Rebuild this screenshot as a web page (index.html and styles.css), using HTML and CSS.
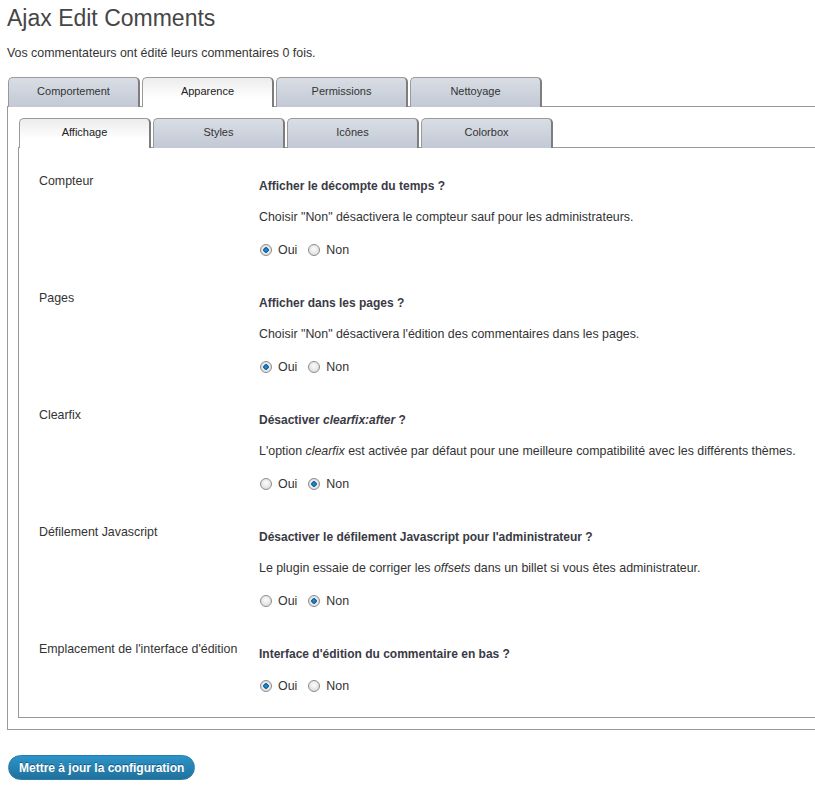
FILE: index.html
```html
<html>
<head>
  <title>Ajax Edit Comments</title>
  <link rel="stylesheet" href="styles.css">
</head>
<body>
  <div class="wrap">
    <h1>Ajax Edit Comments</h1>
    <p class="intro">Vos commentateurs ont édité leurs commentaires 0 fois.</p>

    <ul class="tabs outer-tabs">
      <li class="tab">Comportement</li>
      <li class="tab active">Apparence</li>
      <li class="tab">Permissions</li>
      <li class="tab">Nettoyage</li>
    </ul>
    <div class="panel outer-panel">
      <ul class="tabs inner-tabs">
        <li class="tab active">Affichage</li>
        <li class="tab">Styles</li>
        <li class="tab">Icônes</li>
        <li class="tab">Colorbox</li>
      </ul>
      <div class="panel inner-panel">

        <div class="row">
          <div class="label">Compteur</div>
          <div class="field">
            <h4>Afficher le décompte du temps ?</h4>
            <p class="desc">Choisir "Non" désactivera le compteur sauf pour les administrateurs.</p>
            <div class="choices">
              <label><input type="radio" name="timer" checked> Oui</label>
              <label><input type="radio" name="timer"> Non</label>
            </div>
          </div>
        </div>

        <div class="row">
          <div class="label">Pages</div>
          <div class="field">
            <h4>Afficher dans les pages ?</h4>
            <p class="desc">Choisir "Non" désactivera l'édition des commentaires dans les pages.</p>
            <div class="choices">
              <label><input type="radio" name="pages" checked> Oui</label>
              <label><input type="radio" name="pages"> Non</label>
            </div>
          </div>
        </div>

        <div class="row">
          <div class="label">Clearfix</div>
          <div class="field">
            <h4>Désactiver <em>clearfix:after</em> ?</h4>
            <p class="desc">L'option <em>clearfix</em> est activée par défaut pour une meilleure compatibilité avec les différents thèmes.</p>
            <div class="choices">
              <label><input type="radio" name="clearfix"> Oui</label>
              <label><input type="radio" name="clearfix" checked> Non</label>
            </div>
          </div>
        </div>

        <div class="row">
          <div class="label">Défilement Javascript</div>
          <div class="field">
            <h4>Désactiver le défilement Javascript pour l'administrateur ?</h4>
            <p class="desc">Le plugin essaie de corriger les <em>offsets</em> dans un billet si vous êtes administrateur.</p>
            <div class="choices">
              <label><input type="radio" name="scroll"> Oui</label>
              <label><input type="radio" name="scroll" checked> Non</label>
            </div>
          </div>
        </div>

        <div class="row last">
          <div class="label">Emplacement de l'interface d'édition</div>
          <div class="field">
            <h4>Interface d'édition du commentaire en bas ?</h4>
            <div class="choices">
              <label><input type="radio" name="bottom" checked> Oui</label>
              <label><input type="radio" name="bottom"> Non</label>
            </div>
          </div>
        </div>

      </div>
    </div>

    <p class="submit"><input type="button" class="button-primary" value="Mettre à jour la configuration"></p>
  </div>
</body>
</html>
```

FILE: styles.css
```css
html, body {
  margin: 0;
  padding: 0;
  background: #fff;
}
body {
  font: 12.4px/16px "Liberation Sans", Arial, sans-serif;
  color: #333;
}
.wrap {
  padding: 4px 0 0 7px;
}
h1 {
  margin: 0;
  font-size: 23px;
  line-height: 28px;
  font-weight: normal;
  color: #464646;
}
.intro {
  margin: 13px 0 16px;
}

/* tabs */
.tabs {
  display: flex;
  gap: 2px;
  margin: 0;
  padding: 0;
  list-style: none;
  position: relative;
  z-index: 1;
  margin-bottom: -1px;
}
.outer-tabs {
  margin-left: 1px;
}
.inner-tabs {
  margin-left: 1px;
}
.tab {
  box-sizing: border-box;
  width: 132px;
  height: 30px;
  border: 1px solid #9a9a9a;
  border-right: 2px solid #7d7d7d;
  border-bottom: none;
  border-radius: 5px 5px 0 0;
  background: linear-gradient(#d9dde4, #c2c9d5);
  text-align: center;
  font-size: 11px;
  line-height: 27px;
  color: #333;
}
.tab.active {
  background: linear-gradient(#ececec, #fff 70%);
  color: #222;
}

/* panels */
.panel {
  border: 1px solid #999;
  border-right: none;
}
.outer-panel {
  padding: 11px 0 11px 10px;
}
.inner-panel {
  padding: 25px 0 22px 20px;
}

/* rows */
.row {
  display: flex;
  padding-bottom: 31px;
}
.row.last {
  padding-bottom: 0;
}
.label {
  width: 220px;
  flex: none;
}
.field h4 {
  margin: 5px 0 15px;
  font-size: 12px;
  line-height: 16px;
  color: #3a3a44;
}
.desc {
  margin: 0 0 16px;
}
.choices {
  display: flex;
  gap: 10px;
  height: 18px;
  align-items: center;
}
.choices label {
  display: flex;
  align-items: center;
}
.choices input {
  appearance: none;
  -webkit-appearance: none;
  box-sizing: border-box;
  width: 12px;
  height: 12px;
  margin: 0 6px 0 1px;
  border: 1px solid #8c8c8c;
  border-radius: 50%;
  background: radial-gradient(circle at 50% 40%, #fdfdfd, #d4d4d4);
}
.choices input:checked {
  background: radial-gradient(circle, #2a9ad6 0, #0b5c9c 2.5px, #eee 3px, #cfcfcf 100%);
}

/* submit */
.submit {
  margin: 25px 0 0 1px;
}
.button-primary {
  height: 25px;
  padding: 0 10px;
  border: 1px solid #2a7cab;
  border-radius: 13px;
  background: linear-gradient(#2c93c9, #21719c);
  color: #fff;
  font: bold 12px "Liberation Sans", Arial, sans-serif;
  text-shadow: 0 -1px 0 rgba(0, 0, 0, 0.35);
}
```
